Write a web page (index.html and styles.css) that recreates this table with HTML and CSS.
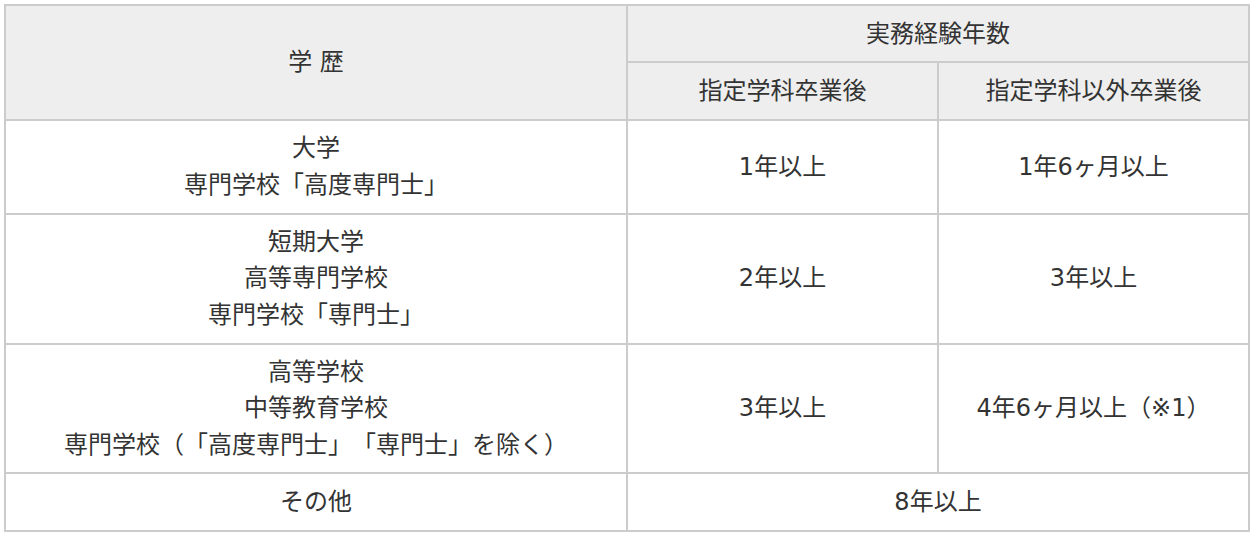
FILE: index.html
```html
<!DOCTYPE html>
<html lang="ja">
<head>
<meta charset="utf-8">
<title>実務経験年数</title>
<link rel="stylesheet" href="styles.css">
</head>
<body>
<table class="exp-table">
  <colgroup>
    <col class="col-edu">
    <col class="col-year">
    <col class="col-year">
  </colgroup>
  <thead>
    <tr>
      <th rowspan="2">学 歴</th>
      <th colspan="2">実務経験年数</th>
    </tr>
    <tr>
      <th>指定学科卒業後</th>
      <th>指定学科以外卒業後</th>
    </tr>
  </thead>
  <tbody>
    <tr>
      <td>大学<br>専門学校「高度専門士」</td>
      <td>1年以上</td>
      <td>1年6ヶ月以上</td>
    </tr>
    <tr>
      <td>短期大学<br>高等専門学校<br>専門学校「専門士」</td>
      <td>2年以上</td>
      <td>3年以上</td>
    </tr>
    <tr>
      <td>高等学校<br>中等教育学校<br>専門学校（「高度専門士」「専門士」を除く）</td>
      <td>3年以上</td>
      <td>4年6ヶ月以上（※1）</td>
    </tr>
    <tr>
      <td>その他</td>
      <td colspan="2">8年以上</td>
    </tr>
  </tbody>
</table>
</body>
</html>
```

FILE: styles.css
```css
html, body {
  margin: 0;
  padding: 0;
  background: #ffffff;
}

body {
  padding: 4px;
  font-family: "DejaVu Sans", "Noto Sans CJK JP", sans-serif;
  font-size: 24px;
  color: #333333;
  text-spacing-trim: space-all;
  font-feature-settings: "palt" 0;
}

.exp-table {
  border-collapse: separate;
  border-spacing: 0;
  table-layout: fixed;
  width: 1246px;
  border-top: 2px solid #cccccc;
  border-left: 2px solid #cccccc;
}

.col-edu {
  width: 622px;
}

.col-year {
  width: 311px;
}

.exp-table th,
.exp-table td {
  border-right: 2px solid #cccccc;
  border-bottom: 2px solid #cccccc;
  padding: 9.6px 0;
  line-height: 36.25px;
  text-align: center;
  vertical-align: middle;
  font-weight: normal;
}

.exp-table th {
  background: #eeeeee;
}
```
